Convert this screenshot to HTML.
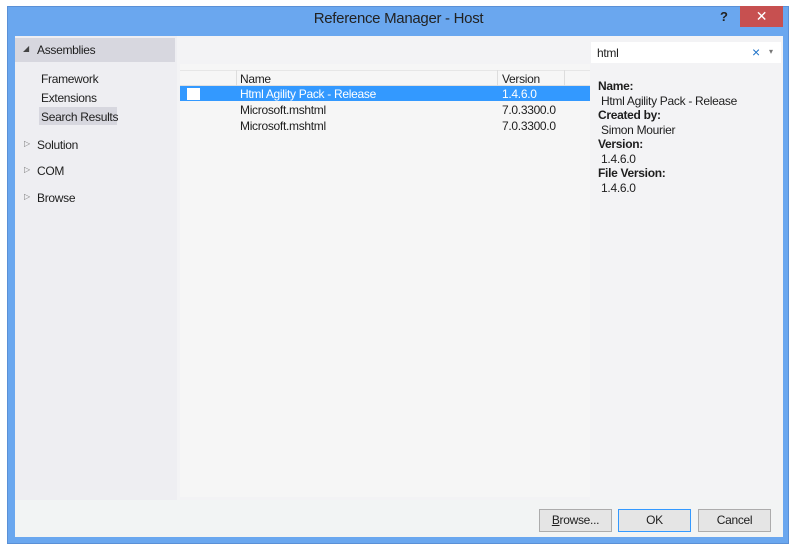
<!DOCTYPE html>
<html><head><style>
*{margin:0;padding:0;box-sizing:border-box}
body{width:797px;height:549px;background:#fff;font-family:"Liberation Sans",sans-serif;font-size:12px;letter-spacing:-0.3px;color:#1e1e1e;position:relative;overflow:hidden}
.a{position:absolute}
</style></head><body>
<div class="a" style="left:7px;top:6px;width:782px;height:538px;background:#6aa7ef;border:1px solid #5a90d6"></div>
<div class="a" style="left:0;top:10px;width:797px;text-align:center;font-size:15px;color:#222">Reference Manager - Host</div>
<div class="a" style="left:720px;top:9px;font-size:13px;font-weight:bold;color:#222">?</div>
<div class="a" style="left:740px;top:6px;width:43px;height:21px;background:#c75050;color:#fff;text-align:center;font-size:14px;line-height:21px">✕</div>
<div class="a" style="left:15px;top:36px;width:768px;height:501px;background:#f3f3f5"></div>
<div class="a" style="left:15px;top:36px;width:162px;height:464px;background:#eeeef2"></div>
<div class="a" style="left:15px;top:38px;width:160px;height:24px;background:#d7d7df"></div>
<div class="a" style="left:23px;top:44px;font-size:8px;color:#444">◢</div>
<div class="a" style="left:37px;top:43px">Assemblies</div>
<div class="a" style="left:39px;top:107px;width:78px;height:18px;background:#d7d7df"></div>
<div class="a" style="left:41px;top:72px">Framework</div>
<div class="a" style="left:41px;top:91px">Extensions</div>
<div class="a" style="left:41px;top:110px">Search Results</div>
<div class="a" style="left:24px;top:139px;font-size:8px;color:#777">▷</div>
<div class="a" style="left:37px;top:138px">Solution</div>
<div class="a" style="left:24px;top:165px;font-size:8px;color:#777">▷</div>
<div class="a" style="left:37px;top:164px">COM</div>
<div class="a" style="left:24px;top:192px;font-size:8px;color:#777">▷</div>
<div class="a" style="left:37px;top:191px">Browse</div>
<div class="a" style="left:180px;top:64px;width:410px;height:433px;background:#f6f6f6"></div>
<div class="a" style="left:180px;top:70px;width:410px;height:16px;border-bottom:1px solid #e0e0e0;border-top:1px solid #e6e6e6"></div>
<div class="a" style="left:236px;top:70px;width:1px;height:16px;background:#ddd"></div>
<div class="a" style="left:497px;top:70px;width:1px;height:16px;background:#ddd"></div>
<div class="a" style="left:564px;top:70px;width:1px;height:16px;background:#ddd"></div>
<div class="a" style="left:240px;top:72px">Name</div>
<div class="a" style="left:502px;top:72px">Version</div>
<div class="a" style="left:180px;top:86px;width:410px;height:15px;background:#3399ff"></div>
<div class="a" style="left:187px;top:88px;width:13px;height:12px;background:#fff"></div>
<div class="a" style="left:240px;top:87px;color:#fff">Html Agility Pack - Release</div>
<div class="a" style="left:502px;top:87px;color:#fff">1.4.6.0</div>
<div class="a" style="left:240px;top:103px">Microsoft.mshtml</div>
<div class="a" style="left:502px;top:103px">7.0.3300.0</div>
<div class="a" style="left:240px;top:119px">Microsoft.mshtml</div>
<div class="a" style="left:502px;top:119px">7.0.3300.0</div>
<div class="a" style="left:591px;top:42px;width:190px;height:21px;background:#fff"></div>
<div class="a" style="left:597px;top:46px">html</div>
<div class="a" style="left:752px;top:44px;color:#1e72c8;font-size:14px">×</div>
<div class="a" style="left:769px;top:47px;color:#777;font-size:8px">▾</div>
<div class="a" style="left:598px;top:79px;line-height:14.5px">
<b>Name:</b><br>&nbsp;Html Agility Pack - Release<br><b>Created by:</b><br>&nbsp;Simon Mourier<br><b>Version:</b><br>&nbsp;1.4.6.0<br><b>File Version:</b><br>&nbsp;1.4.6.0</div>
<div class="a" style="left:15px;top:500px;width:768px;height:37px;background:#f2f4f4"></div>
<div class="a" style="left:539px;top:509px;width:73px;height:23px;background:#e5e5e5;border:1px solid #acacac;text-align:center;line-height:21px"><u>B</u>rowse...</div>
<div class="a" style="left:618px;top:509px;width:73px;height:23px;background:#e5e5e5;border:1px solid #3399ff;text-align:center;line-height:21px">OK</div>
<div class="a" style="left:698px;top:509px;width:73px;height:23px;background:#e5e5e5;border:1px solid #acacac;text-align:center;line-height:21px">Cancel</div>
</body></html>
